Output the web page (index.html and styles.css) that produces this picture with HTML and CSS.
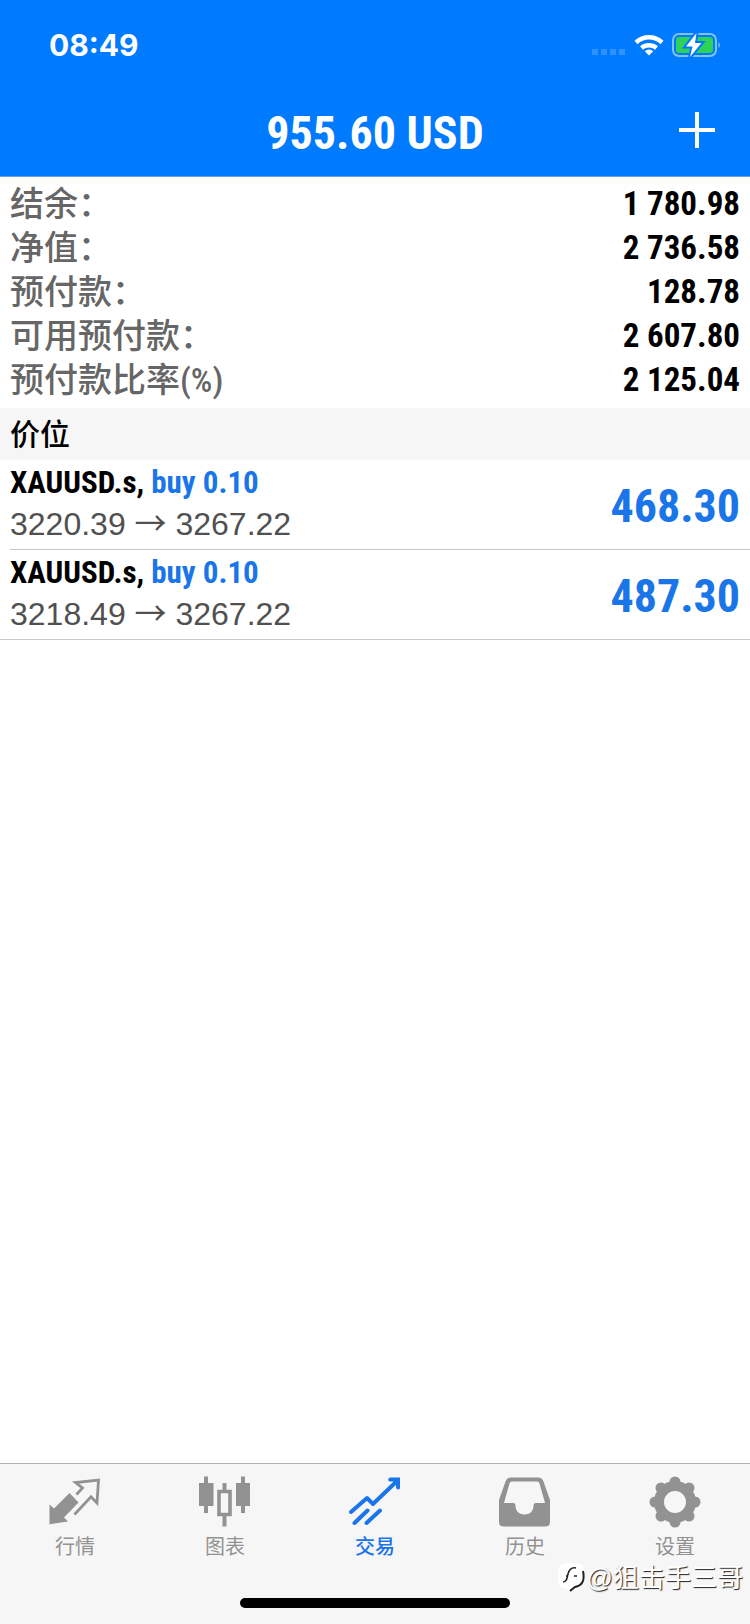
FILE: index.html
```html
<!DOCTYPE html>
<html lang="zh-CN">

<head>
  <meta charset="UTF-8">
  <meta name="viewport" content="width=device-width, initial-scale=1.0">
  <title>交易</title>
  <link rel="stylesheet" href="styles.css">
</head>

<body>
  <header class="header">
    <div class="status-bar">
      <time class="clock">08:49</time>
      <div class="status-icons">
        <svg class="signal" width="34" height="24" viewBox="0 0 34 24">
          <path d="M0 16h6v6H0zM9 16h6v6H9zM18 16h6v6h-6zM27 16h6v6h-6z" />
        </svg>
        <svg class="wifi" width="30" height="24" viewBox="0 0 30 24">
          <path d="M2 9.500a19 19 0 0 1 26 0M7.500 15a11.500 11.500 0 0 1 15 0" fill="none" stroke="#fff" stroke-width="4.500" />
          <path d="M15 22.500l-4.200-4.200a6 6 0 0 1 8.400 0z" fill="#fff" />
        </svg>
        <svg class="battery" width="50" height="26" viewBox="0 0 50 26">
          <rect x="1" y="2" width="43" height="22" rx="6" fill="none" stroke="#7fc3f5" stroke-width="2" />
          <rect x="4" y="5" width="37" height="16" rx="3" fill="#30d158" />
          <path d="M46.500 10q3 3 0 6z" fill="#7fc3f5" />
          <path d="M24.500 1L14 14.500h6.500L18 25l11.500-14H23z" fill="#fff" stroke="#007aff" stroke-width="4" paint-order="stroke" />
        </svg>
      </div>
    </div>
    <div class="nav">
      <h1>955.60 USD</h1>
      <button type="button" class="add-button" aria-label="新订单">
        <svg width="36" height="36" viewBox="0 0 36 36">
          <path d="M18 0v36M0 18h36" stroke="#fff" stroke-width="4" />
        </svg>
      </button>
    </div>
  </header>

  <main>
    <dl class="account">
      <div><dt>结余：</dt><dd>1 780.98</dd></div>
      <div><dt>净值：</dt><dd>2 736.58</dd></div>
      <div><dt>预付款：</dt><dd>128.78</dd></div>
      <div><dt>可用预付款：</dt><dd>2 607.80</dd></div>
      <div><dt>预付款比率(%)</dt><dd>2 125.04</dd></div>
    </dl>

    <h2>价位</h2>
    <ul class="positions">
      <li>
        <div>
          <p class="symbol">XAUUSD.s, <span>buy 0.10</span></p>
          <p class="prices">3220.39 <span class="arrow">→</span> 3267.22</p>
        </div>
        <strong class="profit">468.30</strong>
      </li>
      <li>
        <div>
          <p class="symbol">XAUUSD.s, <span>buy 0.10</span></p>
          <p class="prices">3218.49 <span class="arrow">→</span> 3267.22</p>
        </div>
        <strong class="profit">487.30</strong>
      </li>
    </ul>
  </main>

  <footer class="footer">
    <nav class="tabs">
      <a href="#quotes">
        <svg width="52" height="52" viewBox="0 0 52 52">
          <path d="M27.500 18.500l6-6.500-7-5.500L49.500 4 48 27 42 20.800 25.500 38.500" fill="none" stroke="currentColor" stroke-width="2.800" />
          <path d="M20.500 17l9 9.500L15 41.500l4 4L.5 48.200V28.500l4.500 4z" fill="currentColor" />
        </svg>
        行情
      </a>
      <a href="#charts">
        <svg width="52" height="52" viewBox="0 0 52 52">
          <path d="M5 .5h4V7h5.500v23H9v7H5v-7H0V7h5zM42 .5h4V7h5v23h-5v7h-4v-7h-5V7h5z" fill="currentColor" />
          <path d="M25.500 7v8M25.500 39v11.500" stroke="currentColor" stroke-width="4" />
          <path d="M20 15.500h11v23H20z" fill="none" stroke="currentColor" stroke-width="3.600" />
        </svg>
        图表
      </a>
      <a href="#trade" class="active">
        <svg width="52" height="52" viewBox="0 0 52 52">
          <path d="M2 36l16-14 6 6L47 6M5.500 47l13-12.500M17.500 47L31 34.500" fill="none" stroke="currentColor" stroke-width="4" stroke-linecap="round" stroke-linejoin="round" />
          <path d="M41 1.500h10V12q-1.500 3-4 0V8l-3-2.500h-3.500q-3-2 .5-4z" fill="currentColor" />
        </svg>
        交易
      </a>
      <a href="#history">
        <svg width="52" height="52" viewBox="0 0 52 52">
          <path fill-rule="evenodd" d="M12 1.500h27q4 0 5.500 4L51 24v22q0 4.500-4.500 4.500h-42Q0 50.500 0 46V24L6.500 5.500q1.500-4 5.500-4zM13 5.500q-2 0-2.500 2L5 27h9.500q2 0 2 2.500c0 5 3 9 9 9s9-4 9-9q0-2.500 2-2.500H46L40.500 7.500q-.5-2-2.500-2z" fill="currentColor" />
        </svg>
        历史
      </a>
      <a href="#settings">
        <svg width="52" height="52" viewBox="0 0 52 52">
          <circle cx="26" cy="26" r="16" fill="none" stroke="currentColor" stroke-width="10" />
          <path d="M26 9V6M26 43v3M9 26H6M43 26h3M14 14l-2-2M38 14l2-2M14 38l-2 2M38 38l2 2" stroke="currentColor" stroke-width="11" stroke-linecap="round" />
        </svg>
        设置
      </a>
    </nav>
    <div class="home-indicator"></div>
    <div class="watermark">
      <svg width="30" height="32" viewBox="0 0 30 32">
        <rect x="1" y="1" width="26" height="26" rx="8" fill="#fff" />
        <path d="M6 20c4 0 4-4 5-8s3-7 8-6M9 14h2M17 14h3" fill="none" stroke="#222" stroke-width="1.500" />
        <path d="M26 9q3 14-8 16l-5 4" fill="none" stroke="#222" stroke-width="2" />
      </svg>
      <span>@狙击手三哥</span>
    </div>
  </footer>
</body>

</html>
```

FILE: styles.css
```css
* {
  box-sizing: border-box;
}

body {
  display: flex;
  flex-direction: column;
  min-height: 100vh;
  margin: 0;
  background-color: #fff;
  color: #000;
  font-family: "Liberation Sans", "Noto Sans CJK SC", sans-serif;
}

h1,
h2,
p,
dl,
dd,
ul {
  margin: 0;
  padding: 0;
}

svg {
  display: block;
}

h1,
dd,
.symbol,
.profit {
  font-family: "Roboto Condensed", "Liberation Sans", sans-serif;
  font-weight: 700;
}

.header {
  background-color: #007aff;
  border-bottom: 1px solid #6b9fd8;
  color: #fff;
}

.status-bar {
  display: flex;
  justify-content: space-between;
  align-items: center;
  height: 88px;
  padding: 2px 28px 0 49px;
}

.clock {
  font-family: Inter, sans-serif;
  font-size: 30px;
  font-weight: 700;
}

.status-icons {
  display: flex;
  align-items: center;
  gap: 8px;
}

.signal {
  fill: #3092ff;
}

.nav {
  display: grid;
  grid-template-columns: 1fr auto 1fr;
  align-items: center;
  height: 88px;
  padding: 0 35px;
}

h1 {
  grid-column: 2;
  padding-top: 2px;
  font-size: 46px;
  line-height: 56px;
}

.add-button {
  justify-self: end;
  padding: 0 0 4px;
  border: none;
  background: none;
  cursor: pointer;
}

.account {
  padding: 5px 10px 6px;
}

.account div {
  display: flex;
  justify-content: space-between;
  height: 44px;
  line-height: 44px;
}

dt {
  color: #666;
  font-family: "Roboto Condensed", "Noto Sans CJK SC", sans-serif;
  font-size: 34px;
  font-weight: 500;
}

dd {
  font-size: 33px;
}

h2 {
  padding: 2px 10px 0;
  background-color: #f6f6f6;
  font-size: 30px;
  font-weight: 500;
  line-height: 50px;
}

.positions {
  border-bottom: 1px solid #c8c8c8;
  list-style: none;
}

.positions li {
  display: flex;
  justify-content: space-between;
  align-items: center;
  margin-left: 10px;
  padding: 3px 10px 4px 0;
}

.positions li + li {
  border-top: 1px solid #c8c8c8;
}

.symbol {
  font-size: 31px;
  line-height: 40px;
}

.symbol span,
.profit {
  color: #1a75e8;
}

.prices {
  color: #505050;
  font-size: 32px;
  line-height: 42px;
}

.arrow {
  font-family: "Noto Sans CJK SC", sans-serif;
  line-height: 1;
}

.profit {
  padding-top: 4px;
  font-size: 46px;
}

.footer {
  position: relative;
  margin-top: auto;
  padding: 12px 0 16px;
  border-top: 1px solid #b2b2b2;
  background-color: #f6f6f6;
}

.tabs {
  display: grid;
  grid-template-columns: repeat(5, 1fr);
}

.tabs a {
  display: flex;
  flex-direction: column;
  align-items: center;
  gap: 4px;
  color: #929292;
  font-size: 20px;
  line-height: 30px;
  text-decoration: none;
}

.tabs .active {
  color: #1a75e8;
  font-weight: 500;
}

.home-indicator {
  width: 36%;
  height: 10px;
  margin: 36px auto 0;
  border-radius: 5px;
  background-color: #000;
}

/* sits over the tab bar */
.watermark {
  position: absolute;
  right: 7px;
  bottom: 28px;
  display: flex;
  align-items: center;
  color: #fff;
  font-size: 26px;
  line-height: 36px;
  text-shadow: 1px 1px 1px #222;
}
```
